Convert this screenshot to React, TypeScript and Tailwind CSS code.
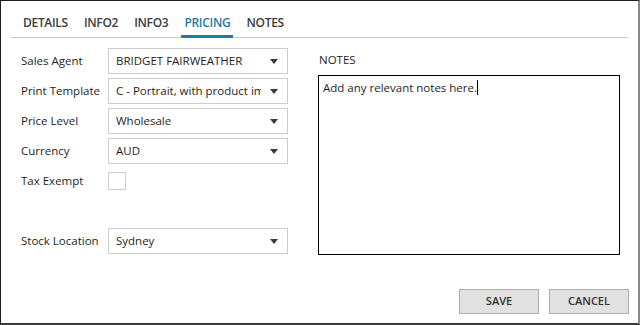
import { useState } from "react";

const tabs = ["DETAILS", "INFO2", "INFO3", "PRICING", "NOTES"];

function Caret() {
  return (
    <svg width="8" height="5" viewBox="0 0 8 5" className="shrink-0">
      <path d="M0 0H8L4 5Z" fill="#3a3a3a" />
    </svg>
  );
}

function SelectBox({ value }: { value: string }) {
  return (
    <div className="flex h-[26px] w-[180px] items-center justify-between border border-[#cccccc] bg-white pl-[7px] pr-[9px]">
      <span className="w-[145px] overflow-hidden whitespace-nowrap text-[11.5px] text-[#1e1e1e]">{value}</span>
      <Caret />
    </div>
  );
}

function Row({ label, children }: { label: string; children: React.ReactNode }) {
  return (
    <div className="flex h-[26px] items-center">
      <div className="w-[87px] text-[11.5px] text-[#1e1e1e]">{label}</div>
      {children}
    </div>
  );
}

export default function App() {
  const [active, setActive] = useState("PRICING");

  return (
    <div
      className="flex h-[325px] w-[640px] flex-col border-t border-l border-b-2 border-r-2 border-t-[#1e1e1e] border-l-[#1e1e1e] border-b-[#3a3a3a] border-r-[#8a8a8a] bg-white"
      style={{ fontFamily: '"Open Sans", "Noto Sans", sans-serif' }}
    >
      {/* tab strip */}
      <div className="mx-[10px] mt-[8px] flex h-[29px] items-stretch gap-[10px] border-b border-[#c8c8c8] pl-[9px]">
        {tabs.map((t) => (
          <button
            key={t}
            onClick={() => setActive(t)}
            className={
              "-mb-px border-b-[3px] px-[3px] pt-[2px] text-[12px] font-semibold tracking-[-0.3px] " +
              (t === active ? "border-[#1c7aa6] text-[#1c7aa6]" : "border-transparent text-[#3c3c3c]")
            }
          >
            {t}
          </button>
        ))}
      </div>

      <div className="flex flex-1 pl-[20px] pt-[10px]">
        {/* left form */}
        <div className="flex w-[297px] flex-col gap-[4px]">
          <Row label="Sales Agent">
            <SelectBox value="BRIDGET FAIRWEATHER" />
          </Row>
          <Row label="Print Template">
            <SelectBox value="C - Portrait, with product images" />
          </Row>
          <Row label="Price Level">
            <SelectBox value="Wholesale" />
          </Row>
          <Row label="Currency">
            <SelectBox value="AUD" />
          </Row>
          <Row label="Tax Exempt">
            <div className="h-[18px] w-[18px] border border-[#cccccc] bg-white" />
          </Row>
          <div className="mt-[30px]">
            <Row label="Stock Location">
              <SelectBox value="Sydney" />
            </Row>
          </div>
        </div>

        {/* notes */}
        <div className="flex flex-col">
          <div className="pl-[1px] pt-[3px] text-[11.5px] text-[#1e1e1e]">NOTES</div>
          <div className="mt-[7px] h-[180px] w-[302px] border-[1.5px] border-black px-[4px] pt-[1px] text-[11.5px] text-[#1e1e1e]">
            Add any relevant notes here.<span className="inline-block h-[15px] w-px translate-y-[3px] bg-black" />
          </div>
        </div>
      </div>

      {/* buttons */}
      <div className="flex justify-end gap-[10px] pb-[9px] pr-[9px]">
        <button className="h-[25px] w-[80px] border border-[#adadad] bg-[#e1e1e1] text-[11px] font-semibold text-[#333]">SAVE</button>
        <button className="h-[25px] w-[80px] border border-[#adadad] bg-[#e1e1e1] text-[11px] font-semibold text-[#333]">CANCEL</button>
      </div>
    </div>
  );
}
